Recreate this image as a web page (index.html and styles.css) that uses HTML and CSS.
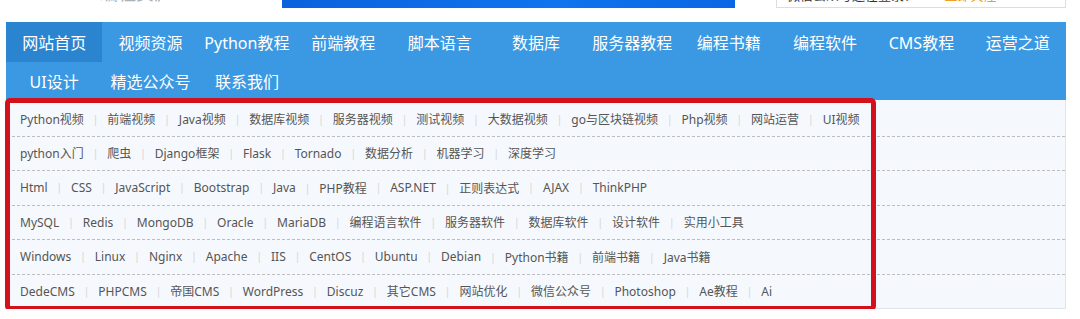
FILE: index.html
```html
<!DOCTYPE html>
<html>
<head>
  <meta charset="utf-8">
  <link rel="stylesheet" href="styles.css">
</head>
<body>
  <div class="top">
    <span class="logo">编程资源网</span>
    <div class="banner"></div>
    <div class="login">
      <span class="login-text">微信公众号还在登录？</span>
      <span class="login-link">立即关注</span>
    </div>
  </div>

  <div class="nav">
    <a class="active">网站首页</a>
    <a>视频资源</a>
    <a>Python教程</a>
    <a>前端教程</a>
    <a>脚本语言</a>
    <a>数据库</a>
    <a>服务器教程</a>
    <a>编程书籍</a>
    <a>编程软件</a>
    <a>CMS教程</a>
    <a>运营之道</a>
    <a>UI设计</a>
    <a>精选公众号</a>
    <a>联系我们</a>
  </div>

  <div class="panel">
    <ul class="row">
      <li>Python视频</li><li>前端视频</li><li>Java视频</li><li>数据库视频</li><li>服务器视频</li><li>测试视频</li><li>大数据视频</li><li>go与区块链视频</li><li>Php视频</li><li>网站运营</li><li>UI视频</li>
    </ul>
    <ul class="row">
      <li>python入门</li><li>爬虫</li><li>Django框架</li><li>Flask</li><li>Tornado</li><li>数据分析</li><li>机器学习</li><li>深度学习</li>
    </ul>
    <ul class="row">
      <li>Html</li><li>CSS</li><li>JavaScript</li><li>Bootstrap</li><li>Java</li><li>PHP教程</li><li>ASP.NET</li><li>正则表达式</li><li>AJAX</li><li>ThinkPHP</li>
    </ul>
    <ul class="row">
      <li>MySQL</li><li>Redis</li><li>MongoDB</li><li>Oracle</li><li>MariaDB</li><li>编程语言软件</li><li>服务器软件</li><li>数据库软件</li><li>设计软件</li><li>实用小工具</li>
    </ul>
    <ul class="row">
      <li>Windows</li><li>Linux</li><li>Nginx</li><li>Apache</li><li>IIS</li><li>CentOS</li><li>Ubuntu</li><li>Debian</li><li>Python书籍</li><li>前端书籍</li><li>Java书籍</li>
    </ul>
    <ul class="row">
      <li>DedeCMS</li><li>PHPCMS</li><li>帝国CMS</li><li>WordPress</li><li>Discuz</li><li>其它CMS</li><li>网站优化</li><li>微信公众号</li><li>Photoshop</li><li>Ae教程</li><li>Ai</li>
    </ul>
    <div class="mark"></div>
  </div>
</body>
</html>
```

FILE: styles.css
```css
body {
  margin: 0;
  width: 1080px;
  background-color: #fff;
  font-family: "Noto Sans", "Noto Sans CJK SC", sans-serif;
}

/* clipped header strip above the menu */
.top {
  height: 22px;
  overflow: hidden;
  display: flex;
  align-items: flex-start;
}
.logo {
  margin: -17px 0 0 100px;
  width: 60px;
  font-size: 18px;
  line-height: 20px;
  color: #a9b1ba;
  white-space: nowrap;
  overflow: hidden;
}
.banner {
  margin: -32px 0 0 122px;
  width: 453px;
  height: 40px;
  background: linear-gradient(90deg, #0a62dc, #0f74ee 60%, #0a66e4);
}
.login {
  margin: -31px 0 0 41px;
  width: 290px;
  height: 39px;
  box-sizing: border-box;
  border: 1px solid #ddd;
  padding: 17px 0 0 10px;
  font-size: 13px;
  line-height: 16px;
  white-space: nowrap;
}
.login-text {
  color: #333;
}
.login-link {
  margin-left: 24px;
  color: #f0a020;
}

/* main menu */
.nav {
  margin-left: 6px;
  width: 1060px;
  display: grid;
  grid-template-columns: repeat(11, 1fr);
  grid-template-rows: 40px 38px;
  background-color: #3b98e2;
}
.nav a {
  display: flex;
  align-items: center;
  justify-content: center;
  color: #fff;
  font-size: 16px;
  white-space: nowrap;
}
.nav a.active {
  background-color: #2b84cf;
}

/* link panel */
.panel {
  position: relative;
  margin-left: 6px;
  width: 1060px;
  box-sizing: border-box;
  padding-top: 2px;
  background-color: #f5f9fd;
  border-right: 1px solid #dfe5ec;
  border-bottom: 1px solid #dfe5ec;
}
.row {
  list-style: none;
  margin: 0 0 0 6px;
  padding: 0 0 0 8px;
  height: 33.5px;
  display: flex;
  align-items: center;
  border-bottom: 1px dashed #bdbdbd;
  font-size: 12px;
  color: #555;
}
.row:last-of-type {
  border-bottom: none;
}
.row li {
  white-space: nowrap;
}
.row li + li::before {
  content: "|";
  margin: 0 9px;
  color: #d4d4d4;
  font-size: 10px;
  vertical-align: 1px;
}

/* red annotation frame drawn over the panel */
.mark {
  position: absolute;
  left: -1px;
  top: -2px;
  width: 871px;
  height: 213px;
  box-sizing: border-box;
  border: 5px solid #d3111c;
  border-radius: 5px;
}
```
